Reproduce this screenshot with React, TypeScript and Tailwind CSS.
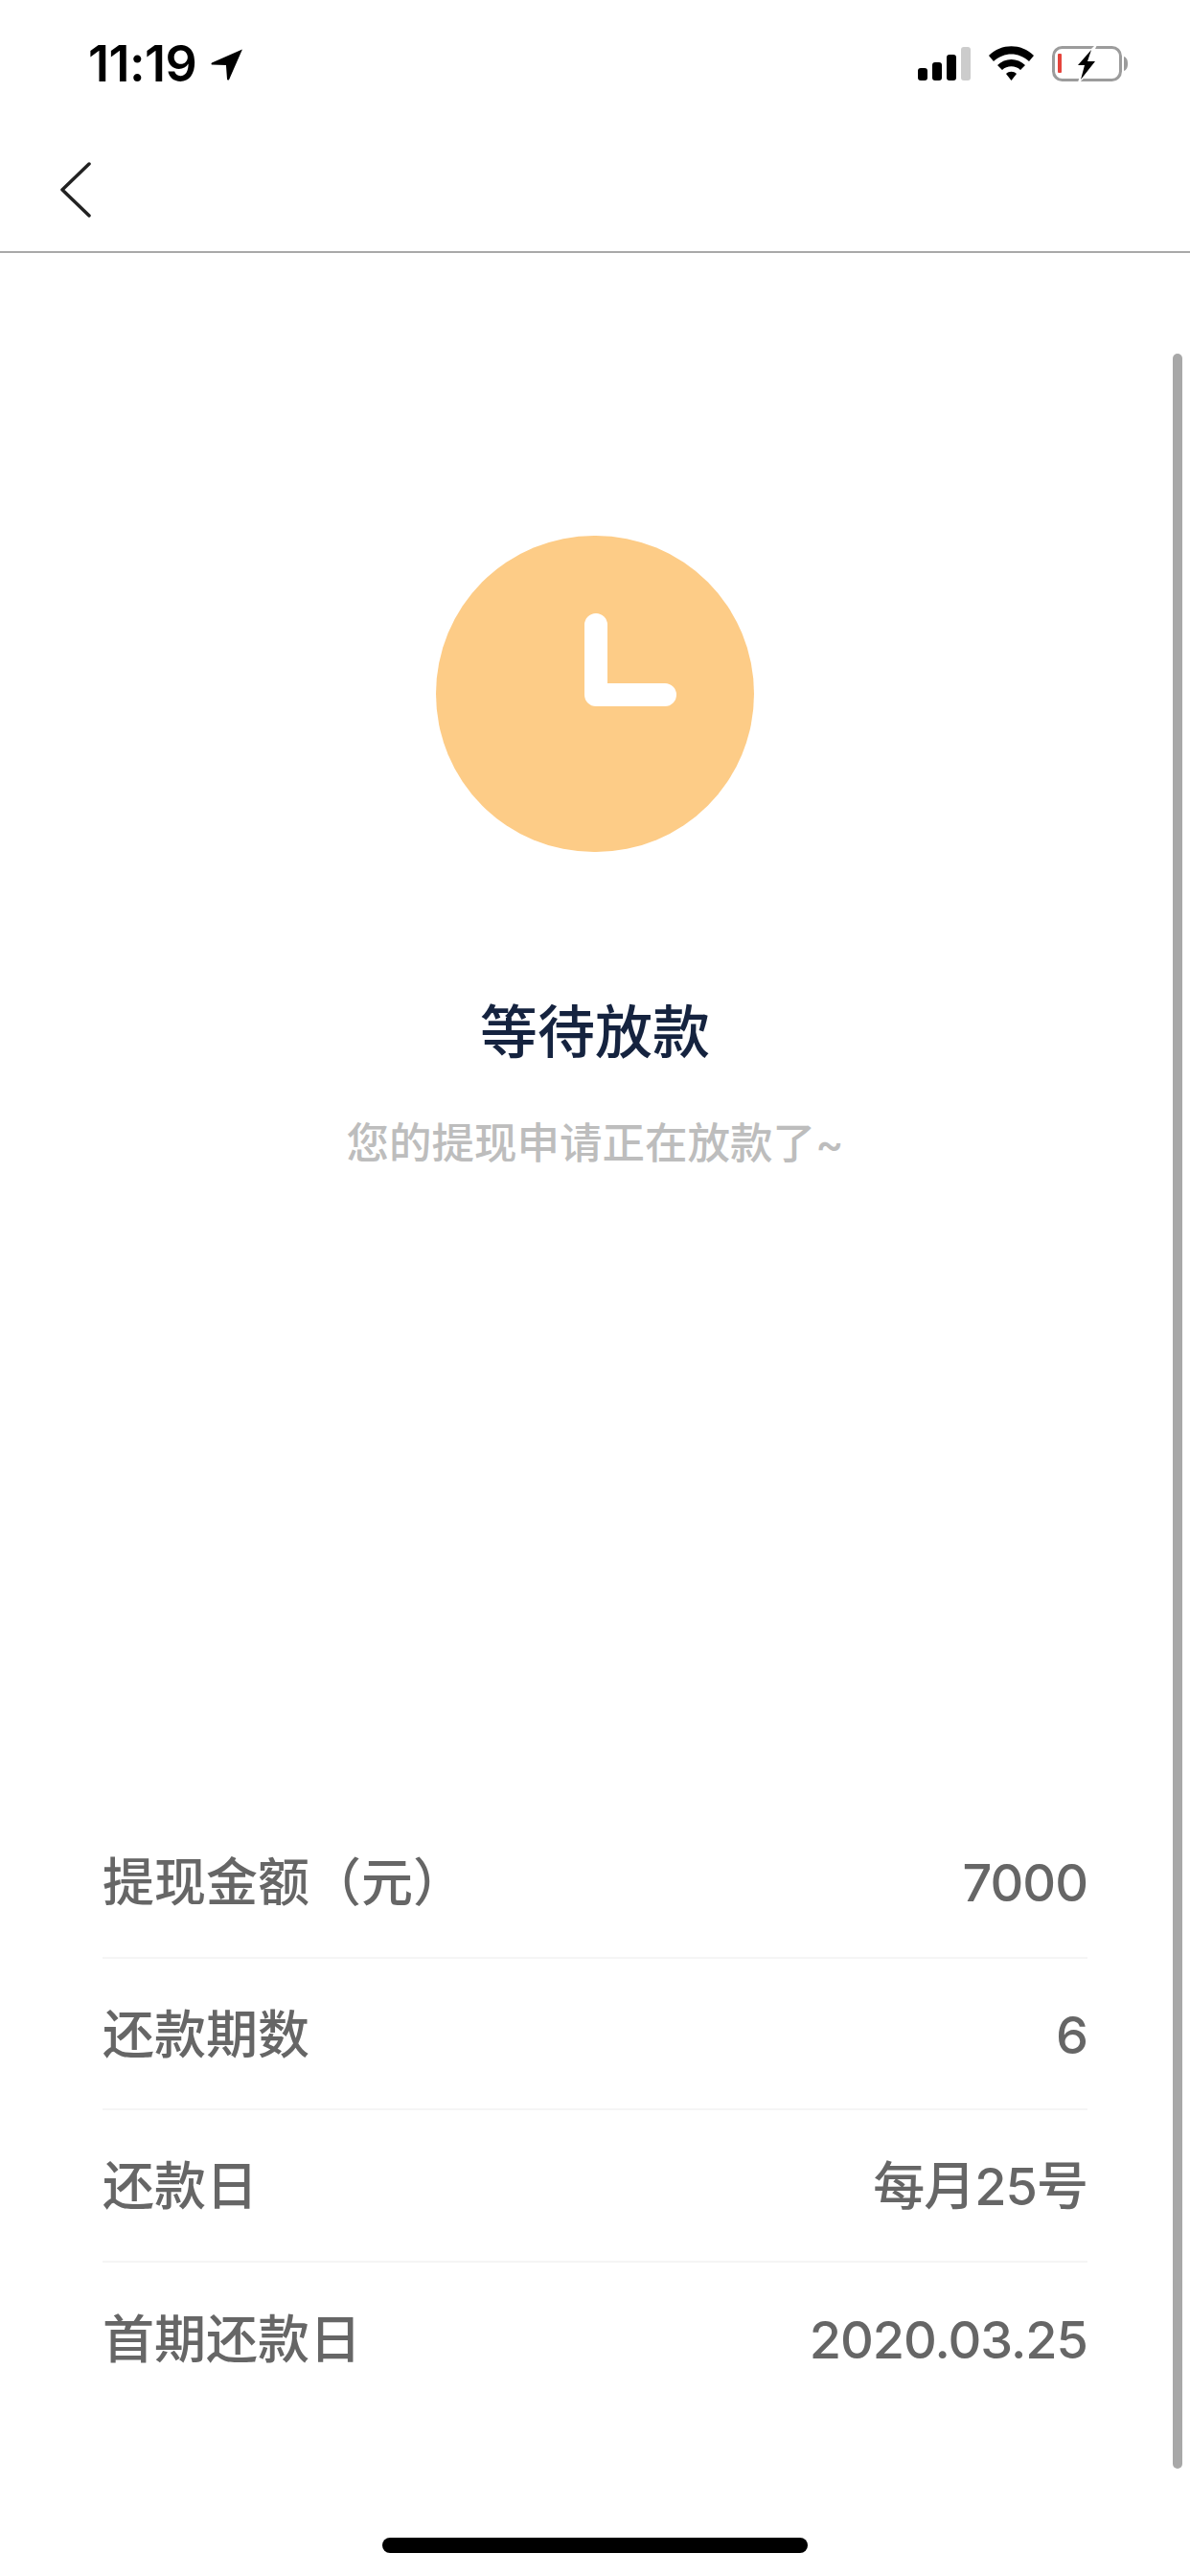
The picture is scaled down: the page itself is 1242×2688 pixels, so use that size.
const cjk = "font-['Inter','Noto_Sans_CJK_SC',sans-serif]";

const rows = [
  ["提现金额（元）", "7000"],
  ["还款期数", "6"],
  ["还款日", "每月25号"],
  ["首期还款日", "2020.03.25"],
];

function StatusIcons() {
  return (
    <svg width="225" height="42" viewBox="958 47 225 42" className="block">
      <rect x="958" y="72" width="10" height="13" rx="3" fill="#000" />
      <rect x="973" y="66" width="10" height="19" rx="3" fill="#000" />
      <rect x="988" y="58" width="10" height="27" rx="3" fill="#000" />
      <rect x="1003" y="50" width="10" height="35" rx="3" fill="#ccc" />
      <path d="M1032 59C1045 46 1066 46 1079 59L1074 65C1063 55 1048 55 1037 65Z" fill="#000" />
      <path d="M1041 69C1049 61 1062 61 1070 69L1065 74C1060 69 1051 69 1046 74Z" fill="#000" />
      <path d="M1050 78C1053 75 1058 75 1061 78L1055.5 85Z" fill="#000" />
      <rect x="1099.5" y="50.5" width="70" height="34" rx="9" fill="none" stroke="#9c9c9c" strokeWidth="3" />
      <path d="M1173 60C1176 61 1177 64 1177 67.500C1177 71 1176 74 1173 75Z" fill="#9c9c9c" />
      <rect x="1104" y="57" width="4" height="20" rx="1" fill="#e5443c" />
      <path d="M1143 48L1120 71H1130L1124 90L1149 64H1137L1145 48Z" fill="#fff" />
      <path d="M1139 53L1125 69H1132L1128 84L1143 65H1135Z" fill="#000" />
    </svg>
  );
}

export default function App() {
  return (
    <div className={`relative flex h-[2688px] w-[1242px] flex-col overflow-hidden bg-white ${cjk}`}>
      <div className="flex h-[132px] shrink-0 items-center justify-between pt-[2px] pl-[92px] pr-[59px]">
        <div className="flex items-center gap-[15px]">
          <span className="font-['Inter',sans-serif] text-[52px] leading-[60px] font-semibold tracking-[-0.5px] text-black">11:19</span>
          <svg width="34" height="34" viewBox="0 0 32 32">
            <path d="M31 1.500L1 14.500C0 15.200 .5 16.500 1.500 16.500L15 17L16 30.500C16 31.500 17.500 32 18 31Z" fill="#000" />
          </svg>
        </div>
        <StatusIcons />
      </div>

      <div className="flex h-[132px] shrink-0 items-center border-b-[2px] border-[#a9a9a9] pl-[62px]">
        <svg width="34" height="58" viewBox="0 0 34 58" className="mb-[-2px]" fill="none">
          <path d="M31 2L3 29L31 56" stroke="#222" strokeWidth="3.500" strokeLinecap="round" strokeLinejoin="round" />
        </svg>
      </div>

      <div className="flex flex-1 flex-col items-center pt-[295px]">
        <div className="relative h-[330px] w-[332px] rounded-full bg-[#fdcc87]">
          <svg width="98" height="100" viewBox="0 0 98 100" className="absolute left-[155px] top-[81px]">
            <path d="M12 12V85H84" stroke="#fff" strokeWidth="24" strokeLinecap="round" strokeLinejoin="round" fill="none" />
          </svg>
        </div>
        <h1 className="mt-[158px] text-[60px] leading-[60px] font-medium text-[#15233f]">等待放款</h1>
        <p className="mt-[56px] text-[44.500px] leading-[60px] font-medium text-[#bdbdbd]">您的提现申请正在放款了~</p>

        <div className="mt-auto mb-[169px] w-[1028px]">
          {rows.map(([k, v], i) => (
            <div
              key={k}
              className={`flex h-[158.500px] items-center justify-between pt-[3px] text-[54px] font-medium text-[#666] ${i < 3 ? "border-b-[2px] border-[#f5f5f5]" : ""}`}
            >
              <span>{k}</span>
              <span className="tracking-[-1px]">{v}</span>
            </div>
          ))}
        </div>
      </div>

      <div className="absolute right-[8px] top-[369px] h-[2207px] w-[10px] rounded-full bg-[#a8a8a8]" />
      <div className="absolute bottom-[24px] left-[399px] h-[16px] w-[444px] rounded-full bg-black" />
    </div>
  );
}
